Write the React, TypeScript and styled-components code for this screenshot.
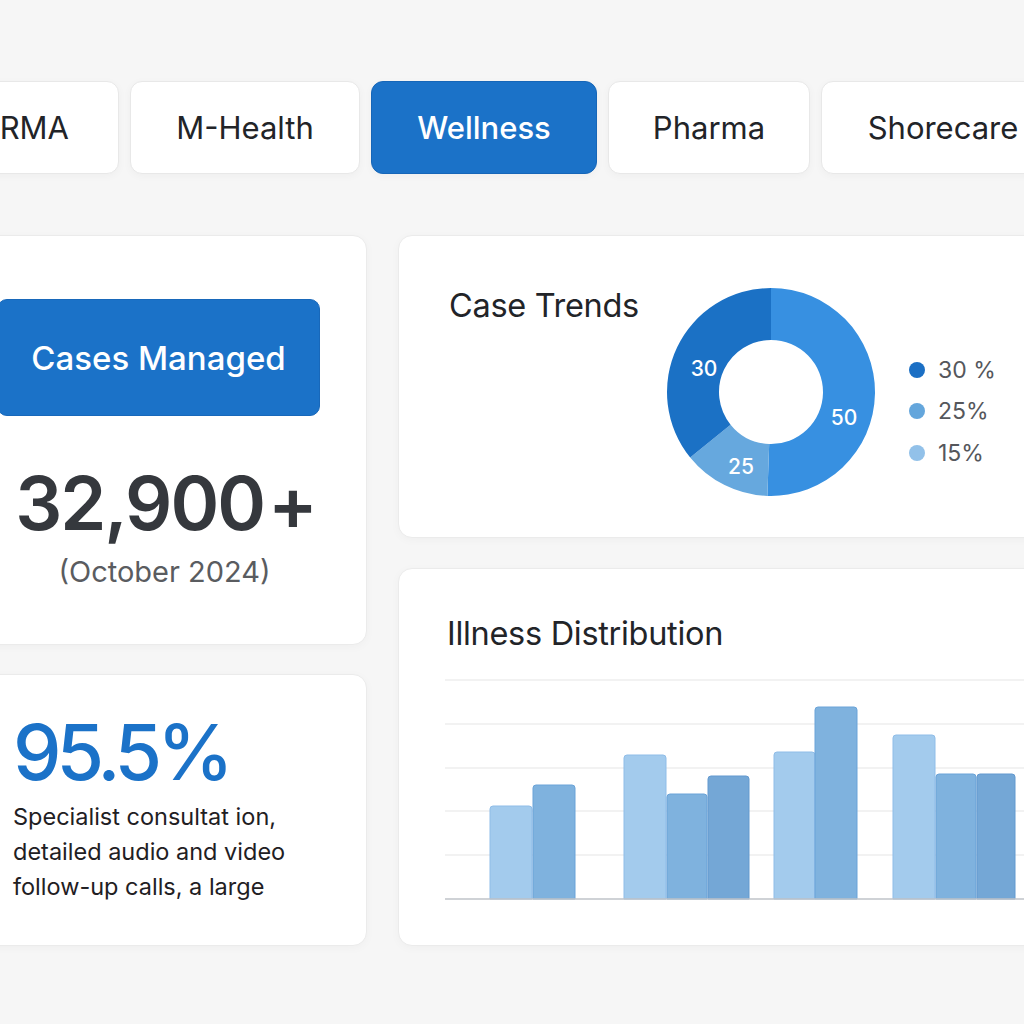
import React from "react";
import styled, { createGlobalStyle } from "styled-components";

const Global = createGlobalStyle`
  html, body { margin: 0; padding: 0; background: #f6f6f6; }
  body { font-family: Inter, "Noto Sans", "Liberation Sans", sans-serif; overflow: hidden; }
`;

const Page = styled.div`
  width: 1024px;
  height: 1024px;
  overflow: hidden;
  background: #f6f6f6;
  position: relative;
`;

const TabRow = styled.div`
  display: flex;
  gap: 11px;
  margin-top: 81px;
  margin-left: -55px;
  height: 93px;
`;

const Tab = styled.div<{ $active?: boolean; $w: number; $end?: boolean }>`
  flex-shrink: 0;
  box-sizing: border-box;
  width: ${(p) => p.$w}px;
  height: 93px;
  padding-right: ${(p) => (p.$end ? 49 : 0)}px;
  display: flex;
  align-items: center;
  justify-content: ${(p) => (p.$end ? "flex-end" : "center")};
  border-radius: 12px;
  font-size: 31px;
  font-weight: ${(p) => (p.$active ? 500 : 400)};
  color: ${(p) => (p.$active ? "#ffffff" : "#222428")};
  background: ${(p) => (p.$active ? "#1b72c8" : "#ffffff")};
  border: 1px solid ${(p) => (p.$active ? "#1666b8" : "#e8e8e8")};
  box-shadow: 0 2px 8px rgba(0, 0, 0, 0.035);
  white-space: nowrap;
`;

const Grid = styled.div`
  display: grid;
  grid-template-columns: 415px 680px;
  column-gap: 31px;
  margin-top: 61px;
  margin-left: -48px;
`;

const Column = styled.div<{ $gap: number }>`
  display: flex;
  flex-direction: column;
  gap: ${(p) => p.$gap}px;
`;

const Card = styled.div<{ $h: number }>`
  box-sizing: border-box;
  height: ${(p) => p.$h}px;
  background: #ffffff;
  border: 1px solid #ebebeb;
  border-radius: 14px;
  box-shadow: 0 2px 10px rgba(0, 0, 0, 0.03);
`;

const CasesCard = styled(Card)`
  padding: 63px 46px 0 46px;
  display: flex;
  flex-direction: column;
  align-items: stretch;
`;

const BlueLabel = styled.div`
  height: 117px;
  border-radius: 10px;
  background: #1b72c8;
  border: 1px solid #1868ba;
  box-sizing: border-box;
  display: flex;
  align-items: center;
  justify-content: center;
  color: #ffffff;
  font-size: 33px;
  font-weight: 500;
  margin-left: -2px;
`;

const BigNumber = styled.div`
  margin-top: 44px;
  padding-left: 12px;
  text-align: center;
  font-size: 74px;
  font-weight: 600;
  letter-spacing: -2px;
  line-height: 86px;
  color: #35383d;
`;

const Plus = styled.span`
  margin-left: 4px;
`;

const DateText = styled.div`
  margin-top: 8px;
  padding-left: 10px;
  text-align: center;
  font-size: 29px;
  color: #5a5c60;
`;

const RateCard = styled(Card)`
  padding: 30px 40px 0 60px;
`;

const Rate = styled.div`
  font-size: 77px;
  font-weight: 500;
  letter-spacing: -5px;
  line-height: 94px;
  color: #1b72c8;
`;

const Body = styled.div`
  margin-top: 0px;
  font-size: 23.5px;
  line-height: 35px;
  color: #1f2023;
`;

const TrendsCard = styled(Card)`
  padding: 51px 0 0 50px;
  display: grid;
  grid-template-columns: 217px 210px auto;
  align-items: start;
`;

const Title = styled.div`
  font-size: 32.5px;
  font-weight: 400;
  letter-spacing: -0.3px;
  line-height: 38px;
  color: #222428;
  white-space: nowrap;
`;

const Legend = styled.div`
  margin-top: 62px;
  padding-left: 33px;
  display: flex;
  flex-direction: column;
`;

const LegendItem = styled.div`
  display: flex;
  align-items: center;
  height: 41.5px;
  gap: 13px;
  font-size: 23px;
  color: #55575c;
`;

const Dot = styled.span<{ $c: string }>`
  width: 16px;
  height: 16px;
  border-radius: 50%;
  background: ${(p) => p.$c};
`;

const IllnessCard = styled(Card)`
  padding: 46px 0 0 48px;
  display: flex;
  flex-direction: column;
`;

const ChartWrap = styled.div`
  margin-top: 22px;
  margin-left: -2px;
`;

function polar(cx: number, cy: number, r: number, deg: number) {
  const a = ((deg - 90) * Math.PI) / 180;
  return [cx + r * Math.cos(a), cy + r * Math.sin(a)];
}

function arcPath(a0: number, a1: number, R: number, r: number, c: number) {
  const [x0, y0] = polar(c, c, R, a0);
  const [x1, y1] = polar(c, c, R, a1);
  const [x2, y2] = polar(c, c, r, a1);
  const [x3, y3] = polar(c, c, r, a0);
  const large = a1 - a0 > 180 ? 1 : 0;
  return `M${x0} ${y0} A${R} ${R} 0 ${large} 1 ${x1} ${y1} L${x2} ${y2} A${r} ${r} 0 ${large} 0 ${x3} ${y3} Z`;
}

const segments = [
  { a0: 0, a1: 182, c: "#3790e1" },
  { a0: 182, a1: 231, c: "#66a8de" },
  { a0: 231, a1: 360, c: "#1b71c5" },
];

function Donut() {
  const c = 105;
  return (
    <svg width="210" height="210" viewBox="0 0 210 210">
      {segments.map((s, i) => (
        <path key={i} d={arcPath(s.a0, s.a1, 104, 52, c)} fill={s.c} />
      ))}
      <g fill="#ffffff" fontSize="21" fontFamily="Inter, sans-serif" fontWeight="500" textAnchor="middle">
        <text x="38" y="89">30</text>
        <text x="178" y="138">50</text>
        <text x="75" y="187">25</text>
      </g>
    </svg>
  );
}

const bars = [
  { x: 491, w: 42, top: 807, k: "L" },
  { x: 534, w: 42, top: 786, k: "M" },
  { x: 625, w: 42, top: 756, k: "L" },
  { x: 668, w: 40, top: 795, k: "M" },
  { x: 709, w: 41, top: 777, k: "D" },
  { x: 775, w: 41, top: 753, k: "L" },
  { x: 816, w: 42, top: 708, k: "M" },
  { x: 894, w: 42, top: 736, k: "L" },
  { x: 937, w: 40, top: 775, k: "M" },
  { x: 978, w: 38, top: 775, k: "D" },
];

const barFill: Record<string, string> = { L: "#a3cbed", M: "#7fb2de", D: "#74a7d6" };
const barStroke: Record<string, string> = { L: "#8fbde8", M: "#6aa3d8", D: "#6399cf" };

function BarChart() {
  const ox = 446;
  const oy = 676;
  const base = 900 - oy;
  const lines = [681, 725, 769, 812, 856];
  return (
    <svg width="640" height="230" viewBox="0 0 640 230">
      {lines.map((y) => (
        <line key={y} x1="0" x2="640" y1={y - oy} y2={y - oy} stroke="#e5e5e5" strokeWidth="1" />
      ))}
      {bars.map((b, i) => {
        const x = b.x - ox;
        const t = b.top - oy;
        return (
          <path
            key={i}
            d={`M${x} ${base} L${x} ${t + 3} Q${x} ${t} ${x + 3} ${t} L${x + b.w - 3} ${t} Q${x + b.w} ${t} ${x + b.w} ${t + 3} L${x + b.w} ${base} Z`}
            fill={barFill[b.k]}
            stroke={barStroke[b.k]}
            strokeWidth="1"
          />
        );
      })}
      <line x1="0" x2="640" y1={base} y2={base} stroke="#bfc3c8" strokeWidth="1.5" />
    </svg>
  );
}

export default function App() {
  return (
    <Page>
      <Global />
      <TabRow>
        <Tab $w={174} $end>RMA</Tab>
        <Tab $w={230}>M-Health</Tab>
        <Tab $w={226} $active>Wellness</Tab>
        <Tab $w={202}>Pharma</Tab>
        <Tab $w={244}>Shorecare</Tab>
      </TabRow>
      <Grid>
        <Column $gap={29}>
          <CasesCard $h={410}>
            <BlueLabel>Cases Managed</BlueLabel>
            <BigNumber>
              32,900<Plus>+</Plus>
            </BigNumber>
            <DateText>(October 2024)</DateText>
          </CasesCard>
          <RateCard $h={272}>
            <Rate>95.5%</Rate>
            <Body>
              Specialist consultat ion,
              <br />
              detailed audio and video
              <br />
              follow-up calls, a large
            </Body>
          </RateCard>
        </Column>
        <Column $gap={30}>
          <TrendsCard $h={303}>
            <Title>Case Trends</Title>
            <Donut />
            <Legend>
              <LegendItem>
                <Dot $c="#1b6fc4" />
                30 %
              </LegendItem>
              <LegendItem>
                <Dot $c="#64a6dc" />
                25%
              </LegendItem>
              <LegendItem>
                <Dot $c="#92c1e9" />
                15%
              </LegendItem>
            </Legend>
          </TrendsCard>
          <IllnessCard $h={378}>
            <Title>Illness Distribution</Title>
            <ChartWrap>
              <BarChart />
            </ChartWrap>
          </IllnessCard>
        </Column>
      </Grid>
    </Page>
  );
}
